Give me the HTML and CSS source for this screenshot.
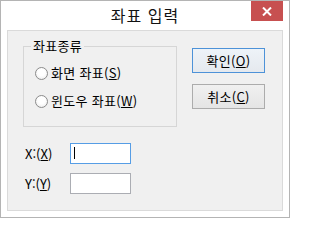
FILE: index.html
```html
<!DOCTYPE html>
<html lang="ko">
<head>
<meta charset="utf-8">
<title>좌표 입력</title>
<link rel="stylesheet" href="styles.css">
</head>
<body>
<div class="window">
  <div class="titlebar">
    <span></span>
    <span class="title">좌표 입력</span>
    <button class="close" aria-label="닫기">
      <svg width="10" height="9" viewBox="0 0 10 9"><path d="M1 0.5 L9 8.5 M9 0.5 L1 8.5" stroke="#fff" stroke-width="2" fill="none"/></svg>
    </button>
  </div>
  <div class="client">
    <div class="top">
      <fieldset class="group">
        <legend>좌표종류</legend>
        <label class="radio"><span class="dot"></span>화면 좌표(<u>S</u>)</label>
        <label class="radio"><span class="dot"></span>윈도우 좌표(<u>W</u>)</label>
      </fieldset>
      <div class="buttons">
        <div class="btn default">확인(<u>O</u>)</div>
        <div class="btn">취소(<u>C</u>)</div>
      </div>
    </div>
    <div class="fields">
      <div class="row"><span class="lbl">X:(<u>X</u>)</span><div class="field focus"><span class="caret"></span></div></div>
      <div class="row"><span class="lbl">Y:(<u>Y</u>)</span><div class="field"></div></div>
    </div>
  </div>
</div>
</body>
</html>
```
FILE: styles.css
```css
html, body { margin: 0; padding: 0; background: #fff; }
body { font-family: "Noto Sans CJK KR", "Noto Sans", sans-serif; font-size: 13px; color: #000; }
u { text-decoration: underline; text-underline-offset: 1px; }

.window {
  width: 290px; height: 218px; box-sizing: border-box;
  border: 1px solid #b4b4b4; background: #fff;
  display: flex; flex-direction: column;
  padding: 0 6px 6px;
}
.titlebar {
  height: 29px; display: grid; grid-template-columns: 1fr auto 1fr;
  align-items: start; margin: 0 -6px; padding: 0 6px;
}
.title { font-size: 16px; line-height: 29px; color: #111; letter-spacing: 1px; }
.close {
  justify-self: end; width: 32px; height: 20px; border: 0; padding: 0; margin: 0;
  background: #c75050; display: flex; align-items: center; justify-content: center;
}
.close svg { display: block; }

.client {
  flex: 1; background: #f0f0f0; border: 1px solid #dadada;
  padding: 8px 0 0 15px;
}
.top { display: flex; align-items: flex-start; gap: 15px; }
.group {
  margin: 0; box-sizing: border-box; width: 154px; height: 88px;
  border: 1px solid #d6d6d6; padding: 0 0 0 11px; min-width: 0;
}
.group legend { padding: 0 2px; margin-left: -4px; line-height: 14px; letter-spacing: 0.3px; }
.radio { display: flex; align-items: center; height: 16px; line-height: 16px; margin-top: 12px; letter-spacing: 0.3px; }
.radio + .radio { margin-top: 12px; }
.dot {
  width: 11px; height: 11px; border-radius: 50%; border: 1px solid #8c8c8c;
  background: radial-gradient(circle at 50% 40%, #fff 40%, #e6e6e6 100%);
  margin-right: 3px;
}
.buttons { display: flex; flex-direction: column; gap: 11px; margin-top: 9px; }
.btn {
  width: 73px; height: 25px; box-sizing: border-box; border: 1px solid #acacac;
  background: linear-gradient(#f0f0f0, #e5e5e5);
  display: flex; align-items: center; justify-content: center; line-height: 14px; letter-spacing: 0.3px;
}
.btn.default { border-color: #4d92d8; background: linear-gradient(#eef3f8, #e5e9ee); }

.fields { margin-top: 16px; display: flex; flex-direction: column; gap: 9px; }
.row { display: flex; align-items: center; }
.lbl { width: 45px; margin-left: 2px; line-height: 14px; }
.field {
  width: 61px; height: 21px; box-sizing: border-box; border: 1px solid #abadb3; background: #fff;
  padding: 3px 0 0 3px;
}
.field.focus { border-color: #569de5; }
.caret { display: block; width: 1px; height: 12px; background: #000; }
```
